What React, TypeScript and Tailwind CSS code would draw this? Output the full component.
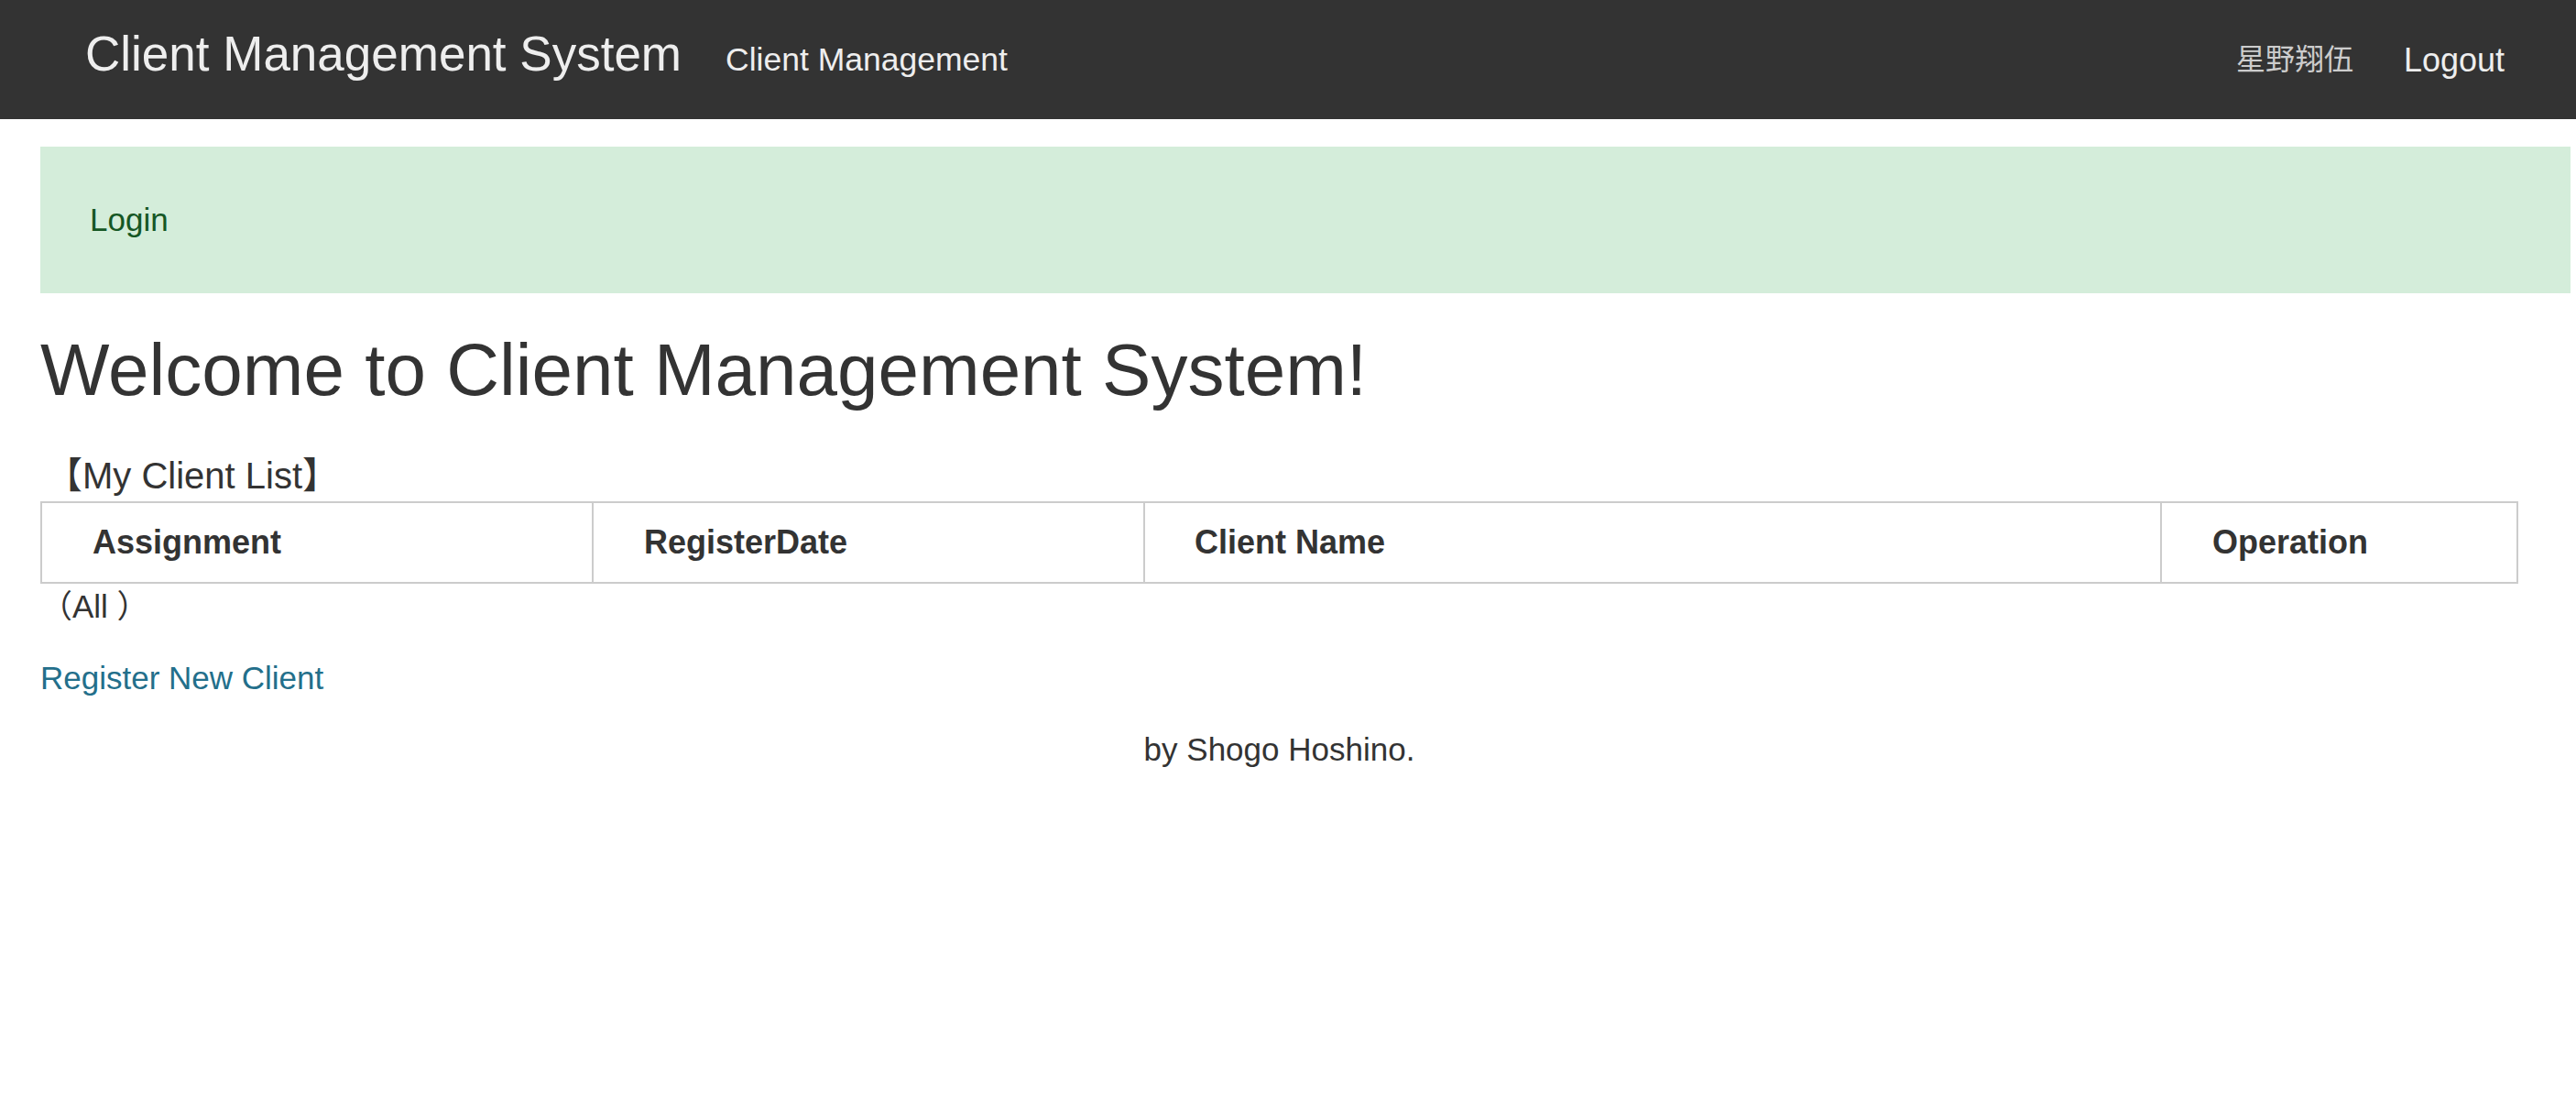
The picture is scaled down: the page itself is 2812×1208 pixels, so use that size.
import React from "react";

const FONT = '"Liberation Sans", "Noto Sans CJK JP", Arial, sans-serif';

export default function App() {
  return (
    <div className="min-h-[1208px] bg-white text-[#333333]" style={{ fontFamily: FONT }}>
      {/* Navbar */}
      <nav className="flex h-[130px] items-center bg-[#333333] pl-[93px] pr-[78px]">
        <a className="pb-[12px] text-[53px] leading-[60px] text-[#eeeeee]">Client Management System</a>
        <a className="ml-[48px] text-[35.5px] leading-[49px] text-[#eeeeee]">Client Management</a>
        <div className="ml-auto flex items-center gap-[55px]">
          <span className="text-[32px] leading-[49px] text-[#cccccc]">星野翔伍</span>
          <a className="text-[36px] leading-[49px] text-[#eeeeee]">Logout</a>
        </div>
      </nav>

      {/* Alert */}
      <div className="ml-[44px] mr-[6px] mt-[30px] bg-[#d4edda] px-[54px] py-[54px] text-[35px] leading-[52px] text-[#155724]">
        Login
      </div>

      <div className="ml-[44px] w-[2705px]">
        <h1 className="mt-[36px] text-[80px] font-normal leading-[96px] text-[#333333]">
          Welcome to Client Management System!
        </h1>

        <div className="mt-[43px] pl-[6px] text-[40px] leading-[48px] text-[#333333]">【My Client List】</div>

        {/* Table */}
        <div className="mt-[4px] flex border-2 border-[#cccccc] text-[36px] font-bold leading-[52px] text-[#333333]">
          <div className="w-[600px] py-[17px] pl-[55px]">Assignment</div>
          <div className="w-[602px] border-l-2 border-[#cccccc] py-[17px] pl-[55px]">RegisterDate</div>
          <div className="w-[1110px] border-l-2 border-[#cccccc] py-[17px] pl-[54px]">Client Name</div>
          <div className="flex-1 border-l-2 border-[#cccccc] py-[17px] pl-[55px]">Operation</div>
        </div>

        <div className="text-[35px] leading-[49px] text-[#333333]">（All ）</div>

        <div className="mt-[29px] text-[35px] leading-[49px]">
          <a className="text-[#236f8b]">Register New Client</a>
        </div>

        <div className="mt-[29px] text-center text-[35px] leading-[49px] text-[#333333]">by Shogo Hoshino.</div>
      </div>
    </div>
  );
}
